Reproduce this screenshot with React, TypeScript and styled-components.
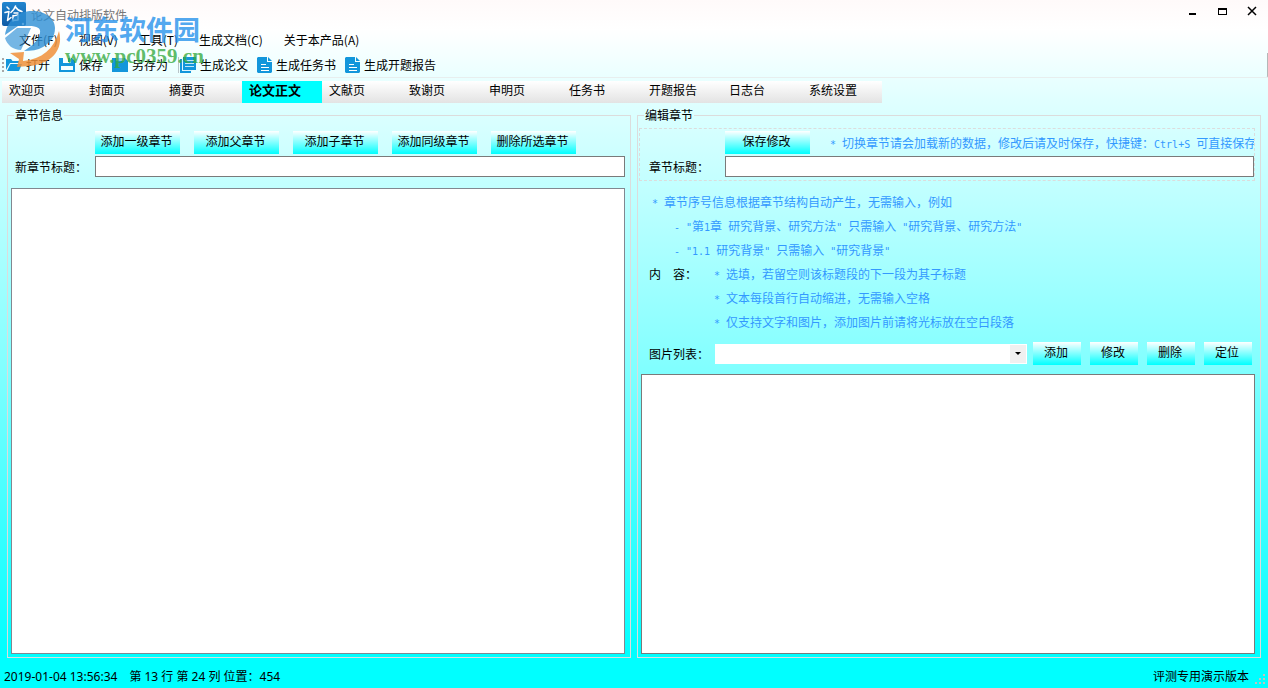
import React from "react";
import styled, { createGlobalStyle } from "styled-components";

const GlobalStyle = createGlobalStyle`
  *, *::before, *::after { box-sizing: border-box; }
  html, body { margin: 0; padding: 0; }
  body, button, input, select, textarea {
    font-family: "Noto Sans CJK SC", "Liberation Sans", sans-serif;
    font-size: 12px;
    color: #000;
  }
`;

const Window = styled.div`
  position: relative;
  display: flex;
  flex-direction: column;
  min-height: 100vh;
  overflow: hidden;
  line-height: 16px;
  background: linear-gradient(#fffafa 0, #ffffff 30px, #e0ffff 100px, #80ffff 54%, #00ffff 95%);
`;

const TitleBar = styled.header`
  display: flex;
  align-items: flex-start;
  height: 30px;
  padding: 2px 5px 0 2px;
`;

const AppTitle = styled.h1`
  flex: 1;
  margin: 0;
  padding: 5px 0 0 5px;
  font-size: 12px;
  font-weight: 400;
  line-height: 16px;
  color: #777;
`;

const WindowButtons = styled.div`
  display: flex;
  gap: 14px;
  padding-top: 2px;
`;

const PlainButton = styled.button`
  display: flex;
  align-items: center;
  margin: 0;
  padding: 0;
  border: 0;
  background: none;
  line-height: 16px;
  white-space: nowrap;
`;

const MenuBar = styled.nav`
  display: flex;
  gap: 21px;
  height: 23px;
  padding: 2px 0 5px 19px;
`;

const ToolBar = styled.div`
  display: flex;
  align-items: center;
  gap: 9px;
  height: 25px;
  padding: 0 0 1px 2px;
  border-bottom: 1px solid #e8eeee;
  border-right: 1px solid #b4b8b8;
  border-radius: 0 0 2px 0;
`;

const Grip = styled.span`
  width: 2px;
  height: 14px;
  margin-right: -7px;
  background: repeating-linear-gradient(#a8a8a8 0 2px, transparent 2px 4px);
`;

const Separator = styled.span`
  width: 1px;
  height: 16px;
  margin: 0 -8px 0 1px;
  background: #b9c4c8;
`;

const ToolButton = styled(PlainButton)`
  gap: 4px;
`;

const TabBar = styled.div`
  display: flex;
  align-self: flex-start;
  height: 22px;
  margin: 3px 0 4px 2px;
  background: linear-gradient(#ffffff, #e3e3e3);
`;

const Tab = styled.button<{ $active?: boolean }>`
  width: 80px;
  margin: 0;
  padding: 0 0 4px 7px;
  border: 0;
  text-align: left;
  line-height: 16px;
  font-size: ${(p) => (p.$active ? "13px" : "12px")};
  font-weight: ${(p) => (p.$active ? 700 : 400)};
  background: ${(p) => (p.$active ? "#00ffff" : "transparent")};
`;

const Panels = styled.main`
  flex: 1;
  display: grid;
  grid-template-columns: minmax(0, 1fr) minmax(0, 1fr);
  gap: 6px;
  padding: 0 7px;
`;

const Group = styled.fieldset<{ $inset: string }>`
  display: flex;
  flex-direction: column;
  min-width: 0;
  margin: 0;
  padding: ${(p) => p.$inset};
  border: 1px solid #dcdcdc;
`;

const Legend = styled.legend<{ $indent: number }>`
  margin-left: ${(p) => p.$indent}px;
  padding: 0 1px;
  line-height: 16px;
`;

const ActionRow = styled.div<{ $indent: number; $gap: number }>`
  display: flex;
  gap: ${(p) => p.$gap}px;
  height: 23px;
  margin-bottom: 2px;
  padding-left: ${(p) => p.$indent}px;
`;

const ActionButton = styled.button<{ $small?: boolean }>`
  flex: none;
  width: ${(p) => (p.$small ? 48 : 85)}px;
  height: 23px;
  margin: 0;
  padding: 0 2px 3px 0;
  border: 0;
  line-height: 16px;
  white-space: nowrap;
  background: linear-gradient(#ffffff, #00ffff);
`;

const FieldRow = styled.div<{ $indent: number }>`
  display: flex;
  align-items: center;
  padding-left: ${(p) => p.$indent}px;
`;

const FieldLabel = styled.label<{ $width: number }>`
  flex: none;
  width: ${(p) => p.$width}px;
  line-height: 16px;
`;

const TextInput = styled.input`
  flex: 1;
  min-width: 0;
  height: 21px;
  padding: 0 3px;
  border: 1px solid #7a7a7a;
  border-radius: 0;
  background: #fff;
`;

const ChapterTree = styled.div`
  flex: 1;
  margin-top: 11px;
  border: 1px solid #828790;
  background: #fff;
`;

const DashedBox = styled.section`
  padding: 2px 0 3px;
  border: 1px dashed #dcdcdc;
`;

const Hint = styled.p`
  margin: 0;
  min-width: 0;
  height: 24px;
  overflow: hidden;
  white-space: pre;
  line-height: 24px;
  color: #3399ff;
`;

const Latin = styled.span`
  font-family: "DejaVu Sans Mono", monospace;
  font-size: 10px;
  line-height: 16px;
`;

const HintList = styled.ul<{ $indent: number }>`
  list-style: none;
  margin: 0;
  padding: 0 0 0 ${(p) => p.$indent}px;
`;

const NestedHint = styled.li`
  padding-left: 22px;
`;

const Notes = styled.section`
  padding: 9px 0 8px;
`;

const ContentRow = styled.div`
  display: flex;
  align-items: flex-start;
  padding-left: 10px;

  label { padding-top: 4px; }
`;

const PictureRow = styled.div`
  display: flex;
  align-items: center;
  padding: 0 3px 0 10px;
`;

const ComboBox = styled.div`
  flex: 1;
  display: grid;
  align-items: center;
  height: 20px;
  margin-right: 6px;
  background: #fff;

  > * { grid-area: 1 / 1; }
`;

const Select = styled.select`
  width: 100%;
  height: 20px;
  padding: 0 20px 0 3px;
  border: 0;
  appearance: none;
  background: transparent;
`;

const ComboArrow = styled.span`
  justify-self: end;
  display: flex;
  align-items: center;
  justify-content: center;
  width: 16px;
  height: 18px;
  margin-right: 1px;
  background: #f0f0f0;
  pointer-events: none;
`;

const SmallActions = styled.div`
  display: flex;
  gap: 9px;
`;

const Editor = styled.textarea`
  flex: 1;
  margin: 9px 0 0 2px;
  padding: 3px;
  border: 1px solid #7a7a7a;
  border-radius: 0;
  resize: none;
  background: #fff;
`;

const StatusBar = styled.footer`
  display: flex;
  align-items: center;
  justify-content: space-between;
  height: 30px;
  padding: 8px 2px 0 4px;
  font-family: "Noto Sans", "Noto Sans CJK SC", sans-serif;
`;

const Position = styled.span`
  display: flex;
  gap: 12px;
`;

const Edition = styled.span`
  display: flex;
  align-items: flex-end;
  gap: 6px;
`;

const Watermark = styled.div`
  position: absolute;
  top: 8px;
  left: 4px;
  display: flex;
  gap: 3px;
  pointer-events: none;
`;

const SiteName = styled.div`
  padding-top: 5px;
  font-size: 27px;
  font-weight: 700;
  line-height: 32px;
  white-space: nowrap;
  color: rgba(35, 145, 235, 0.8);
`;

const SiteUrl = styled.div`
  font-family: "Liberation Serif", serif;
  font-size: 21px;
  font-weight: 700;
  line-height: 22px;
  white-space: nowrap;
  color: rgba(55, 170, 65, 0.8);
`;

const AppIcon = () => (
  <svg width="24" height="24" viewBox="0 0 24 24" aria-hidden="true">
    <defs>
      <linearGradient id="appBlue" x1="0" y1="0" x2="0" y2="1">
        <stop offset="0" stopColor="#2386cf" />
        <stop offset="1" stopColor="#0f5aa5" />
      </linearGradient>
    </defs>
    <rect width="24" height="24" rx="2" fill="url(#appBlue)" />
    <g fill="none" stroke="#fff" strokeWidth="1.5" strokeLinecap="round" strokeLinejoin="round">
      <path d="M5 5l2 2M3 10.500l4-1-1.500 9 3.500-3M13.500 4c-.8 2.600-2.600 4.700-4.600 6.500M13.500 5c1.600 2.500 3.600 4 6.500 4.500M12 11h4M11 13.500v5.500M11 14l5-1v5l-5 .5" />
    </g>
    <circle cx="21" cy="22" r="1.200" fill="#fff" />
  </svg>
);

const SiteLogo = () => (
  <svg width="58" height="60" viewBox="0 0 58 60" aria-hidden="true">
    <path d="M1 27C3 13 14 3 28 3c13 0 23 7 23 17 0 9-5 15-12 19-5 3-12 4-19 4 8-5 15-11 16-18 1-5-3-7-11-7H14z" fill="#2d8fd5" fillOpacity=".8" />
    <path d="M13 20h14L17 42C9 42 3 37 1 30z" fill="#2d8fd5" fillOpacity=".65" />
    <path d="M6 45l14-1-1 9c19-2 31-12 36-30 5 19-8 33-30 35l-12 1 2-8z" fill="#f0903a" fillOpacity=".85" />
  </svg>
);

const FolderIcon = () => (
  <svg width="16" height="16" viewBox="0 0 16 16" fill="#1296db" aria-hidden="true">
    <path d="M0 2h5l1.500 2H13v2H4L0 13z" />
    <path d="M4.500 7H16l-3 7H1z" />
  </svg>
);

const SaveIcon = () => (
  <svg width="16" height="16" viewBox="0 0 16 16" aria-hidden="true">
    <path d="M0 1h13l3 3v11H0z" fill="#1296db" />
    <path d="M4 1h8v5H4zM2 9h12v4H2z" fill="#f4ffff" />
    <path d="M9 1h2v4H9z" fill="#1296db" />
  </svg>
);

const SaveAsIcon = () => (
  <svg width="16" height="16" viewBox="0 0 16 16" aria-hidden="true">
    <path d="M0 1h13l3 3v11H0z" fill="#1296db" />
    <path d="M4 1h8v3H4z" fill="#8fcdec" />
  </svg>
);

const PagesIcon = () => (
  <svg width="16" height="16" viewBox="0 0 16 16" aria-hidden="true">
    <path d="M0 2h2v12h9v2H0z" fill="#1296db" />
    <path d="M3 0h13v13H3z" fill="#1296db" />
    <path d="M5 3.500h9M5 6.500h9M5 9.500h9" stroke="#bfe6f8" strokeWidth="1" />
    <path d="M2.500 1v12.500H12" fill="none" stroke="#dff5ff" strokeWidth="1" />
  </svg>
);

const DocumentIcon = () => (
  <svg width="15" height="16" viewBox="0 0 15 16" aria-hidden="true">
    <path d="M1 0h9v5h5v10l-1 1H1l-1-1V1z" fill="#1296db" />
    <path d="M11 0l4 4h-4z" fill="#1296db" />
    <path d="M4 7.500h5M4 10.500h8M4 13.500h8" stroke="#fff" strokeWidth="1" />
  </svg>
);

const MinimizeIcon = () => (
  <svg width="16" height="16" viewBox="0 0 16 16" aria-hidden="true">
    <path d="M2 9h7v2H2z" />
  </svg>
);

const MaximizeIcon = () => (
  <svg width="16" height="16" viewBox="0 0 16 16" aria-hidden="true">
    <path d="M1 4h9v7H1zM2 6v4h7V6z" fillRule="evenodd" />
  </svg>
);

const CloseIcon = () => (
  <svg width="16" height="16" viewBox="0 0 16 16" aria-hidden="true">
    <path d="M1 3l8 8M9 3l-8 8" stroke="#000" strokeWidth="1.500" />
  </svg>
);

const ResizeGrip = () => (
  <svg width="11" height="11" viewBox="0 0 11 11" fill="#c4c0c0" aria-hidden="true">
    <path d="M8 0h2v2H8zM4 4h2v2H4zM8 4h2v2H8zM0 8h2v2H0zM4 8h2v2H4zM8 8h2v2H8z" />
  </svg>
);

/* Half-width characters take exactly half of a full-width cell. */
const HintText = ({ children }: { children: string }) => (
  <Hint>
    {children
      .split(/([\x20-\x7e]+)/)
      .filter(Boolean)
      .map((run, i) => (/^[\x20-\x7e]/.test(run) ? <Latin key={i}>{run}</Latin> : run))}
  </Hint>
);

const menus = ["文件(F)", "视图(V)", "工具(T)", "生成文档(C)", "关于本产品(A)"];
const tabs = ["欢迎页", "封面页", "摘要页", "论文正文", "文献页", "致谢页", "申明页", "任务书", "开题报告", "日志台", "系统设置"];
const chapterActions = ["添加一级章节", "添加父章节", "添加子章节", "添加同级章节", "删除所选章节"];
const pictureActions = ["添加", "修改", "删除", "定位"];

export default function App() {
  return (
    <Window>
      <GlobalStyle />
      <TitleBar>
        <AppIcon />
        <AppTitle>论文自动排版软件</AppTitle>
        <WindowButtons>
          <PlainButton type="button" aria-label="最小化"><MinimizeIcon /></PlainButton>
          <PlainButton type="button" aria-label="最大化"><MaximizeIcon /></PlainButton>
          <PlainButton type="button" aria-label="关闭"><CloseIcon /></PlainButton>
        </WindowButtons>
      </TitleBar>
      <MenuBar>
        {menus.map((m) => <PlainButton type="button" key={m}>{m}</PlainButton>)}
      </MenuBar>
      <ToolBar>
        <Grip />
        <ToolButton type="button"><FolderIcon />打开</ToolButton>
        <ToolButton type="button"><SaveIcon />保存</ToolButton>
        <ToolButton type="button"><SaveAsIcon />另存为</ToolButton>
        <Separator />
        <ToolButton type="button"><PagesIcon />生成论文</ToolButton>
        <ToolButton type="button"><DocumentIcon />生成任务书</ToolButton>
        <ToolButton type="button"><DocumentIcon />生成开题报告</ToolButton>
      </ToolBar>
      <TabBar role="tablist">
        {tabs.map((t) => (
          <Tab type="button" role="tab" key={t} $active={t === "论文正文"} aria-selected={t === "论文正文"}>{t}</Tab>
        ))}
      </TabBar>
      <Panels>
        <Group $inset="8px 5px 3px 3px">
          <Legend $indent={3}>章节信息</Legend>
          <ActionRow $indent={84} $gap={14}>
            {chapterActions.map((a) => <ActionButton type="button" key={a}>{a}</ActionButton>)}
          </ActionRow>
          <FieldRow $indent={4}>
            <FieldLabel $width={80} htmlFor="new-title">新章节标题：</FieldLabel>
            <TextInput id="new-title" type="text" />
          </FieldRow>
          <ChapterTree role="tree" aria-label="章节信息" />
        </Group>
        <Group $inset="5px 5px 3px 1px">
          <Legend $indent={5}>编辑章节</Legend>
          <DashedBox>
            <ActionRow $indent={85} $gap={20}>
              <ActionButton type="button">保存修改</ActionButton>
              <HintText>* 切换章节请会加载新的数据，修改后请及时保存，快捷键：Ctrl+S 可直接保存</HintText>
            </ActionRow>
            <FieldRow $indent={9}>
              <FieldLabel $width={76} htmlFor="title">章节标题：</FieldLabel>
              <TextInput id="title" type="text" />
            </FieldRow>
          </DashedBox>
          <Notes>
            <HintList $indent={13}>
              <li><HintText>* 章节序号信息根据章节结构自动产生，无需输入，例如</HintText></li>
              <NestedHint><HintText>- "第1章 研究背景、研究方法" 只需输入 "研究背景、研究方法"</HintText></NestedHint>
              <NestedHint><HintText>- "1.1 研究背景" 只需输入 "研究背景"</HintText></NestedHint>
            </HintList>
            <ContentRow>
              <FieldLabel $width={65} htmlFor="content">内　容：</FieldLabel>
              <HintList $indent={0}>
                <li><HintText>* 选填，若留空则该标题段的下一段为其子标题</HintText></li>
                <li><HintText>* 文本每段首行自动缩进，无需输入空格</HintText></li>
                <li><HintText>* 仅支持文字和图片，添加图片前请将光标放在空白段落</HintText></li>
              </HintList>
            </ContentRow>
          </Notes>
          <PictureRow>
            <FieldLabel $width={66} htmlFor="pictures">图片列表：</FieldLabel>
            <ComboBox>
              <Select id="pictures" />
              <ComboArrow>
                <svg width="6" height="3" viewBox="0 0 6 3" aria-hidden="true"><path d="M0 0h6L3 3z" /></svg>
              </ComboArrow>
            </ComboBox>
            <SmallActions>
              {pictureActions.map((a) => <ActionButton type="button" $small key={a}>{a}</ActionButton>)}
            </SmallActions>
          </PictureRow>
          <Editor id="content" />
        </Group>
      </Panels>
      <StatusBar>
        <Position>
          <span>2019-01-04 13:56:34</span>
          <span>第 13 行 第 24 列 位置：454</span>
        </Position>
        <Edition>评测专用演示版本<ResizeGrip /></Edition>
      </StatusBar>
      <Watermark aria-hidden="true">
        <SiteLogo />
        <div>
          <SiteName>河东软件园</SiteName>
          <SiteUrl>www.pc0359.cn</SiteUrl>
        </div>
      </Watermark>
    </Window>
  );
}
